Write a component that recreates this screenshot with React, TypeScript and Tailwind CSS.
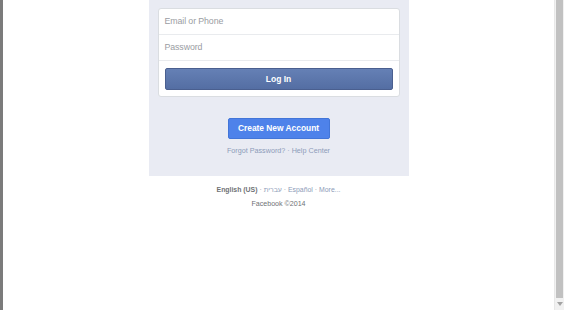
const App = () => {
  return (
    <div
      className="flex h-[310px] w-[564px] overflow-hidden bg-white"
      style={{ fontFamily: '"Liberation Sans", Arial, sans-serif' }}
    >
      <div className="w-[3px] shrink-0 bg-[#7b7b7b]" />

      <div className="flex flex-1 flex-col items-center">
        <div className="flex h-[176px] w-[260px] flex-col items-center bg-[#e9ebf3] px-[9px] pt-[8px]">
          <div className="w-full rounded-[3px] border border-[#dadde1] bg-white">
            <div className="flex h-[26px] items-center border-b border-[#e9ebee] px-[6px] text-[8.8px] tracking-[-0.1px] text-[#9a9da3]">
              Email or Phone
            </div>
            <div className="flex h-[26px] items-center border-b border-[#e9ebee] px-[6px] text-[8.8px] tracking-[-0.1px] text-[#9a9da3]">
              Password
            </div>
            <div className="px-[6px] pb-[6px] pt-[7px]">
              <button className="flex h-[22px] w-full items-center justify-center rounded-[2px] border border-[#4a5f8f] bg-gradient-to-b from-[#6580b5] to-[#546ea3] text-[8.5px] font-bold text-white">
                Log In
              </button>
            </div>
          </div>

          <button className="mt-[21px] flex h-[21px] w-[102px] items-center justify-center whitespace-nowrap rounded-[2px] border border-[#4275d8] bg-[#4e82ea] text-[8.4px] font-bold text-white">
            Create New Account
          </button>

          <div className="mt-[6px] whitespace-nowrap text-[7.2px] leading-[12px] text-[#8d9bb9]">
            Forgot Password? · Help Center
          </div>
        </div>

        <div className="mt-[8px] whitespace-nowrap text-[6.9px] leading-[12px] text-[#8d9bb9]">
          <span className="font-bold text-[#6f7276]">English (US)</span>
          <span className="text-[#9a9da3]"> · </span>עברית
          <span className="text-[#9a9da3]"> · </span>Español
          <span className="text-[#9a9da3]"> · </span>More...
        </div>
        <div className="mt-[2px] whitespace-nowrap text-[7.1px] leading-[12px] text-[#6f7276]">
          Facebook ©2014
        </div>
      </div>

      <div className="flex w-[10px] shrink-0 flex-col border-l border-[#e8e8e8] bg-[#f1f1f1]">
        <div className="mx-[1px] flex-1 bg-[#c1c1c1]" />
        <div className="flex h-[12px] items-center justify-center">
          <svg width="6" height="4" viewBox="0 0 6 4">
            <path d="M0 0 L6 0 L3 4 Z" fill="#a3a3a3" />
          </svg>
        </div>
      </div>
    </div>
  );
};

export default App;
